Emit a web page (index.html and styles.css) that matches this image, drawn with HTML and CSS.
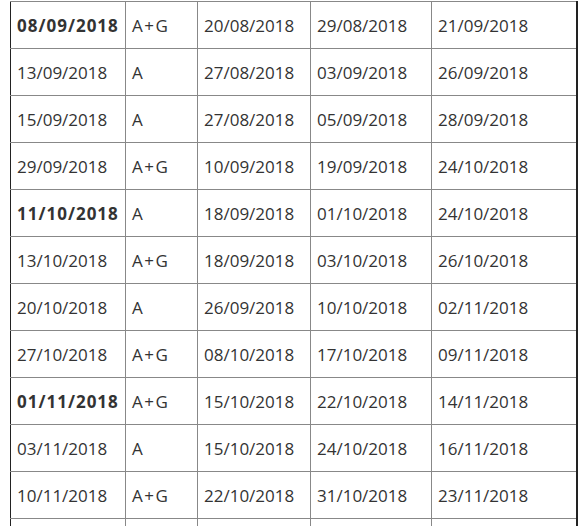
FILE: index.html
```html
<!DOCTYPE html>
<html>
<head>
<meta charset="utf-8">
<link rel="stylesheet" href="styles.css">
</head>
<body>
<div class="wrap">
<table class="dates">
<colgroup>
<col class="c1"><col class="c2"><col class="c3"><col class="c4"><col class="c5">
</colgroup>
<tbody>
<tr><td class="strong">08/09/2018</td><td class="type">A+G</td><td>20/08/2018</td><td>29/08/2018</td><td>21/09/2018</td></tr>
<tr><td>13/09/2018</td><td class="type">A</td><td>27/08/2018</td><td>03/09/2018</td><td>26/09/2018</td></tr>
<tr><td>15/09/2018</td><td class="type">A</td><td>27/08/2018</td><td>05/09/2018</td><td>28/09/2018</td></tr>
<tr><td>29/09/2018</td><td class="type">A+G</td><td>10/09/2018</td><td>19/09/2018</td><td>24/10/2018</td></tr>
<tr><td class="strong">11/10/2018</td><td class="type">A</td><td>18/09/2018</td><td>01/10/2018</td><td>24/10/2018</td></tr>
<tr><td>13/10/2018</td><td class="type">A+G</td><td>18/09/2018</td><td>03/10/2018</td><td>26/10/2018</td></tr>
<tr><td>20/10/2018</td><td class="type">A</td><td>26/09/2018</td><td>10/10/2018</td><td>02/11/2018</td></tr>
<tr><td>27/10/2018</td><td class="type">A+G</td><td>08/10/2018</td><td>17/10/2018</td><td>09/11/2018</td></tr>
<tr><td class="strong">01/11/2018</td><td class="type">A+G</td><td>15/10/2018</td><td>22/10/2018</td><td>14/11/2018</td></tr>
<tr><td>03/11/2018</td><td class="type">A</td><td>15/10/2018</td><td>24/10/2018</td><td>16/11/2018</td></tr>
<tr><td>10/11/2018</td><td class="type">A+G</td><td>22/10/2018</td><td>31/10/2018</td><td>23/11/2018</td></tr>
<tr><td></td><td></td><td></td><td></td><td></td></tr>
</tbody>
</table>
</div>
</body>
</html>
```
FILE: styles.css
```css
html, body {
  margin: 0;
  padding: 0;
  background: #fff;
  overflow: hidden;
  height: 526px;
}
.wrap {
  padding: 1px 0 0 10px;
}
.dates {
  border-collapse: collapse;
  table-layout: fixed;
  width: 566px;
  font-family: "Open Sans", sans-serif;
  font-size: 17px;
  color: #333;
  border-left: 1px solid #222;
  border-right: 2px solid #222;
}
.c1 { width: 115px; }
.c2 { width: 72px; }
.c3 { width: 113px; }
.c4 { width: 121px; }
.c5 { width: 145px; }
.dates td {
  height: 47px;
  padding: 1px 6px 0;
  border: 1px solid #888;
  white-space: nowrap;
  vertical-align: middle;
  box-sizing: border-box;
}
.dates td:first-child { border-left: 1px solid #222; }
.dates td:last-child { border-right: 2px solid #222; }
.dates td.strong {
  font-weight: 700;
  letter-spacing: 1px;
}
.dates td.type {
  letter-spacing: 1.5px;
}
```
